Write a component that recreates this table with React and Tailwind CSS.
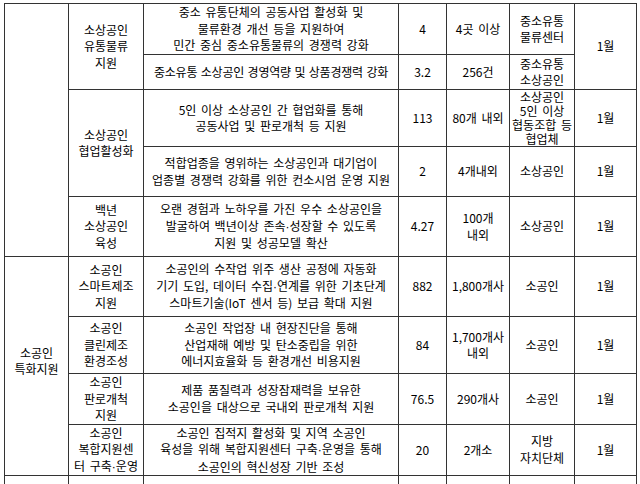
import React from "react";

const rows = [
  {
    h: 51,
    desc: ["중소 유통단체의 공동사업 활성화 및", "물류환경 개선 등을 지원하여", "민간 중심 중소유통물류의 경쟁력 강화"],
    budget: "4",
    target: ["4곳 이상"],
    who: ["중소유통", "물류센터"],
  },
  {
    h: 35,
    desc: ["중소유통 소상공인 경영역량 및 상품경쟁력 강화"],
    tight: true,
    budget: "3.2",
    target: ["256건"],
    who: ["중소유통", "소상공인"],
  },
  {
    h: 56,
    desc: ["5인 이상 소상공인 간 협업화를 통해", "공동사업 및 판로개척 등 지원"],
    budget: "113",
    target: ["80개 내외"],
    who: ["소상공인", "5인 이상", "협동조합 등", "협업체"],
    whoTight: true,
  },
  {
    h: 50,
    desc: ["적합업종을 영위하는 소상공인과 대기업이", "업종별 경쟁력 강화를 위한 컨소시엄 운영 지원"],
    budget: "2",
    target: ["4개내외"],
    who: ["소상공인"],
  },
  {
    h: 60,
    desc: ["오랜 경험과 노하우를 가진 우수 소상공인을", "발굴하여 백년이상 존속·성장할 수 있도록", "지원 및 성공모델 확산"],
    budget: "4.27",
    target: ["100개", "내외"],
    who: ["소상공인"],
  },
  {
    h: 60,
    desc: ["소공인의 수작업 위주 생산 공정에 자동화", "기기 도입, 데이터 수집·연계를 위한 기초단계", "스마트기술(IoT 센서 등) 보급 확대 지원"],
    budget: "882",
    target: ["1,800개사"],
    who: ["소공인"],
  },
  {
    h: 57,
    desc: ["소공인 작업장 내 현장진단을 통해", "산업재해 예방 및 탄소중립을 위한", "에너지효율화 등 환경개선 비용지원"],
    budget: "84",
    target: ["1,700개사", "내외"],
    who: ["소공인"],
  },
  {
    h: 50,
    desc: ["제품 품질력과 성장잠재력을 보유한", "소공인을 대상으로 국내외 판로개척 지원"],
    budget: "76.5",
    target: ["290개사"],
    who: ["소공인"],
  },
  {
    h: 50,
    desc: ["소공인 집적지 활성화 및 지역 소공인", "육성을 위해 복합지원센터 구축·운영을 통해", "소공인의 혁신성장 기반 조성"],
    budget: "20",
    target: ["2개소"],
    who: ["지방", "자치단체"],
  },
];

const names = {
  0: { rs: 2, lines: ["소상공인", "유통물류", "지원"] },
  2: { rs: 2, lines: ["소상공인", "협업활성화"] },
  4: { rs: 1, lines: ["백년", "소상공인", "육성"] },
  5: { rs: 1, lines: ["소공인", "스마트제조", "지원"] },
  6: { rs: 1, lines: ["소공인", "클린제조", "환경조성"] },
  7: { rs: 1, lines: ["소공인", "판로개척", "지원"] },
  8: { rs: 1, lines: ["소공인", "복합지원센", "터 구축·운영"] },
};

// the CJK font draws the middle dot full width, the original is narrow
const Dotted = ({ text }) => {
  const parts = text.split("·");
  return parts.map((p, i) => (
    <React.Fragment key={i}>
      {i > 0 && <span className="font-['Liberation_Sans']">·</span>}
      {p}
    </React.Fragment>
  ));
};

const Lines = ({ lines }) =>
  lines.map((l, i) => (
    <React.Fragment key={i}>
      {i > 0 && <br />}
      <Dotted text={l} />
    </React.Fragment>
  ));

const td = "border border-[#333] px-[2px] py-0 text-center align-middle whitespace-nowrap";

export default function App() {
  return (
    <div
      className="min-h-[484px] bg-white pt-[3px] pl-[4px] text-[12px] leading-[16.5px] text-black [word-spacing:2px]"
      style={{ fontFamily: '"Noto Sans CJK KR", "Noto Sans", sans-serif' }}
    >
      <table className="table-fixed border-collapse w-[632px]">
        <colgroup>
          <col className="w-[64px]" />
          <col className="w-[75px]" />
          <col className="w-[255px]" />
          <col className="w-[48px]" />
          <col className="w-[63px]" />
          <col className="w-[65px]" />
          <col className="w-[62px]" />
        </colgroup>
        <tbody>
          {rows.map((r, i) => (
            <tr key={i} style={{ height: r.h }}>
              {i === 0 && <td rowSpan={5} className={td}></td>}
              {i === 5 && (
                <td rowSpan={4} className={`${td} pb-[10px]`}>
                  소공인
                  <br />
                  특화지원
                </td>
              )}
              {names[i] && (
                <td rowSpan={names[i].rs} className={td}>
                  <Lines lines={names[i].lines} />
                </td>
              )}
              <td className={`${td} ${r.tight ? "tracking-[-0.2px] [word-spacing:1px]" : ""}`}>
                <Lines lines={r.desc} />
              </td>
              <td className={td}>{r.budget}</td>
              <td className={td}>
                <Lines lines={r.target} />
              </td>
              <td className={`${td} ${r.whoTight ? "leading-[14px]" : ""}`}>
                <Lines lines={r.who} />
              </td>
              {i !== 1 && (
                <td rowSpan={i === 0 ? 2 : 1} className={td}>
                  1월
                </td>
              )}
            </tr>
          ))}
          <tr className="h-[30px]">
            <td className={td}></td>
            <td className={td}></td>
            <td className={td}></td>
            <td className={td}></td>
            <td className={td}></td>
            <td className={td}></td>
            <td className={td}></td>
          </tr>
        </tbody>
      </table>
    </div>
  );
}
